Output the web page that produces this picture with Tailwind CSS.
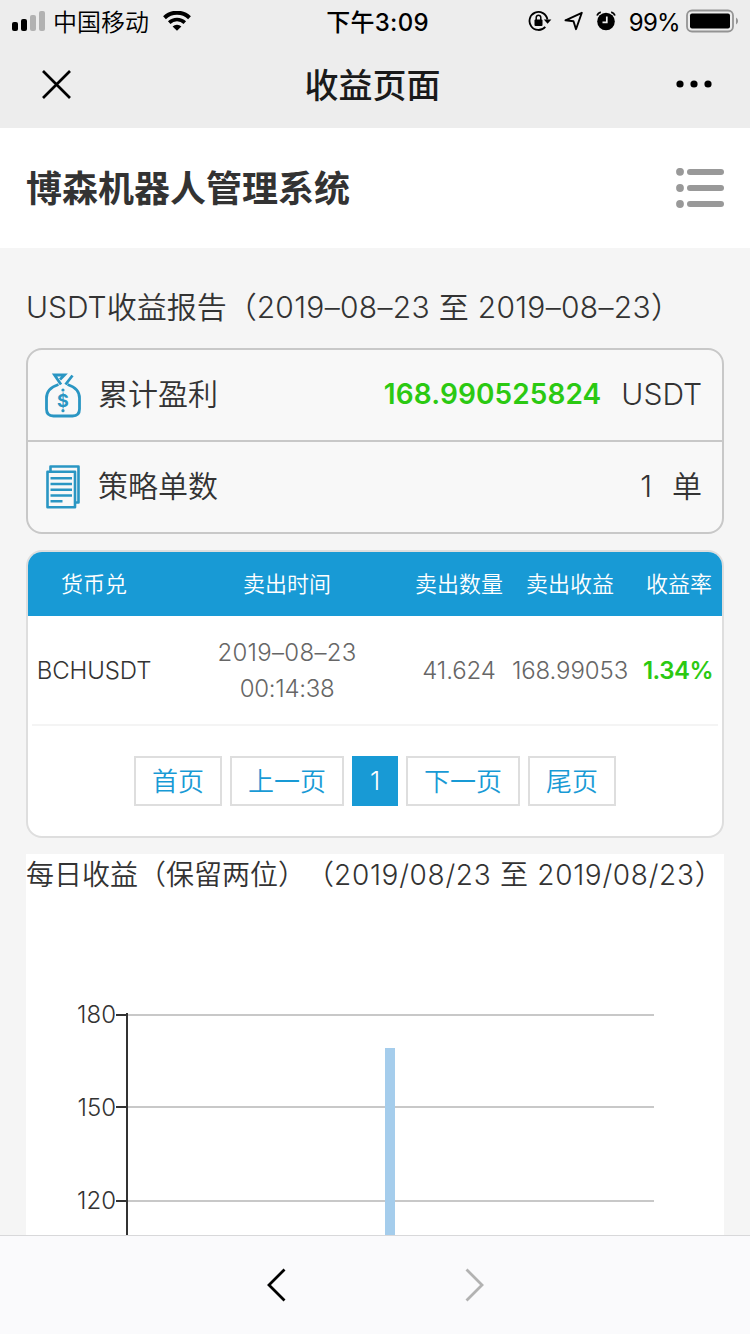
<!DOCTYPE html>
<html lang="zh-CN">
<head>
    <meta charset="UTF-8">
    <meta name="viewport" content="width=device-width, initial-scale=1.0">
    <title>收益页面</title>
    <!-- Tailwind CSS CDN -->
    <script src="https://cdn.jsdelivr.net/npm/@tailwindcss/browser@4"></script>
</head>
<body class="flex flex-col w-[750px] h-[1334px] overflow-hidden bg-[#f5f5f5] text-[#333] font-['Inter','Noto_Sans_CJK_SC',sans-serif] [text-spacing-trim:space-all]">

    <!-- Barra de estado -->
    <div class="h-10 shrink-0 bg-[#ededed] text-black grid grid-cols-3 items-center pl-3 pr-[11px] text-[24px] leading-[38px] whitespace-nowrap">
        <div class="flex items-center">
            <svg class="w-[34px] h-5 mr-[7px]" viewBox="0 0 34 20">
                <rect x="0" y="11" width="6" height="9" rx="2"/>
                <rect x="9" y="8" width="6" height="12" rx="2"/>
                <rect x="18" y="4" width="6" height="16" rx="2" fill="#b2b2b2"/>
                <rect x="27" y="0" width="6" height="20" rx="2" fill="#b2b2b2"/>
            </svg>
            <span class="pt-1 font-[350]">中国移动</span>
            <svg class="w-7 h-5 ml-[14px]" viewBox="0 0 28 20">
                <path d="M1.500 6.700a18 18 0 0 1 25 0" fill="none" stroke="#000" stroke-width="4"/>
                <path d="M6.200 11.600a11.300 11.300 0 0 1 15.600 0" fill="none" stroke="#000" stroke-width="3.600"/>
                <path d="M9.600 15.400a6.400 6.400 0 0 1 8.800 0L14 19.800z"/>
            </svg>
        </div>
        <div class="text-center font-medium tracking-[0.3px] pt-1 pl-1">下午3:09</div>
        <div class="flex items-center justify-end">
            <svg class="w-[24px] h-[22px]" viewBox="0 0 24 22">
                <path d="M19.400 9.500A9 9 0 1 0 17.300 16.900" fill="none" stroke="#000" stroke-width="1.800"/>
                <path d="M15.800 9.500h7.600l-3.800 4.300z"/>
                <rect x="6.500" y="9.500" width="8" height="6.500" rx="1"/>
                <path d="M8.200 10V7.500a2.300 2.300 0 0 1 4.600 0V10" fill="none" stroke="#000" stroke-width="1.500"/>
            </svg>
            <svg class="w-[19px] h-[20px] ml-3" viewBox="0 0 19 20">
                <path d="M17.800 1.800L1.500 9.300l8 .9 2.500 8z" fill="none" stroke="#000" stroke-width="1.900" stroke-linejoin="round"/>
            </svg>
            <svg class="w-5 h-5 ml-[13px]" viewBox="0 0 20 20">
                <circle cx="10" cy="10.500" r="8.800"/>
                <path d="M1 4.500Q2 2 4.800 1.200M19 4.500Q18 2 15.200 1.200" fill="none" stroke="#000" stroke-width="1.800"/>
                <path d="M10.800 5.500v5.800H6.500" fill="none" stroke="#ededed" stroke-width="1.700"/>
            </svg>
            <span class="ml-[13px] pt-1 tracking-[-0.7px]">99%</span>
            <svg class="w-[53px] h-6 ml-[6px]" viewBox="0 0 53 24">
                <rect x="1" y="1.500" width="46" height="21" rx="5" fill="none" stroke="#949494" stroke-width="1.800"/>
                <rect x="4" y="4.500" width="40" height="15" rx="2"/>
                <path d="M50 8.500a4 4 0 0 1 0 7z" fill="#949494"/>
            </svg>
        </div>
    </div>

    <!-- Barra de navegación -->
    <div class="h-[88px] shrink-0 bg-[#ededed] flex items-center justify-between pl-[42px] pr-[38px]">
        <svg class="w-[29px] h-[29px]" viewBox="0 0 29 29">
            <path d="M1 1l27 27M28 1L1 28" stroke="#000" stroke-width="2.700"/>
        </svg>
        <h1 class="pt-1 pr-0.5 text-[34px] leading-none font-medium text-[#1a1a1a]">收益页面</h1>
        <svg class="w-9 h-2" viewBox="0 0 36 8">
            <circle cx="4" cy="4" r="3.600"/>
            <circle cx="18" cy="4" r="3.600"/>
            <circle cx="32" cy="4" r="3.600"/>
        </svg>
    </div>

    <!-- Encabezado -->
    <header class="h-[120px] shrink-0 bg-white flex items-center justify-between px-[26px]">
        <h2 class="pt-0.5 text-[36px] leading-none font-bold">博森机器人管理系统</h2>
        <svg class="w-12 h-10" viewBox="0 0 48 40" fill="#999">
            <circle cx="4" cy="3.800" r="3.900"/><rect x="11" y="1" width="37" height="6" rx="3"/>
            <circle cx="4" cy="20" r="3.900"/><rect x="11" y="17" width="37" height="6" rx="3"/>
            <circle cx="4" cy="36" r="3.900"/><rect x="11" y="33" width="37" height="6" rx="3"/>
        </svg>
    </header>

    <main class="flex-1 min-h-0 overflow-hidden px-[26px]">
        <h3 class="h-[100px] pt-[19px] text-[30px] leading-[80px] whitespace-nowrap font-[350]">USDT收益报告（<span class="tracking-[0.3px]">2019–08–23 至 2019–08–23）</span></h3>

        <!-- Resumen -->
        <section class="h-[186px] border-2 border-[#c8c8c8] rounded-2xl bg-[#f8f8f8] text-[30px] font-[350]">
            <div class="h-[92px] flex items-center border-b-2 border-[#c8c8c8] pl-4 pr-5">
                <svg class="w-[38px] h-[46px]" viewBox="0 0 38 46" fill="none" stroke="#2a96c3" stroke-width="2.800">
                    <path d="M17 12.500L10.500 3H20.500L16 7.500M21.500 12.500L28.500 3.500"/>
                    <path d="M14.500 12.500C7 15 2.500 20 2.500 26v11q0 7 7 7h19q7 0 7-7V26C35.500 20 31 15 23.500 12.500"/>
                    <text x="19" y="34.500" text-anchor="middle" fill="#2a96c3" stroke="none" class="text-[18px] font-bold">$</text>
                    <circle cx="19" cy="18" r="1.600" fill="#2a96c3" stroke="none"/>
                    <circle cx="19" cy="38.700" r="1.600" fill="#2a96c3" stroke="none"/>
                </svg>
                <span class="ml-4 mr-auto pb-0.5">累计盈利</span>
                <span class="pb-0.5 text-[#2bc912] font-semibold text-[28px] tracking-[0.1px]">168.990525824</span>
                <span class="ml-5 pb-0.5">USDT</span>
            </div>
            <div class="h-[90px] flex items-center pl-[18px] pr-5">
                <svg class="w-[34px] h-[44px]" viewBox="0 0 34 44" fill="none" stroke="#2a96c3" stroke-width="2.600" stroke-linejoin="round">
                    <path d="M4.500 6V1.500h28V37.500H30"/>
                    <path d="M1.500 6.800h27.500v35.500H1.500z"/>
                    <path d="M4.500 13.200h21.500M4.500 19h21.500M4.500 24.800h21.500M4.500 30.500h21.500M4.500 36.300h12"/>
                </svg>
                <span class="ml-[18px] mr-auto pb-0.5">策略单数</span>
                <span class="pb-0.5">1</span>
                <span class="ml-5 pb-0.5">单</span>
            </div>
        </section>

        <!-- Tabla de ventas -->
        <section class="mt-4 h-[288px] border-2 border-[#dedede] rounded-2xl bg-white overflow-hidden">
            <div class="h-16 bg-[#189ad5] text-white text-[22px] font-[350] grid grid-cols-[132px_254px_90px_132px_86px] items-center text-center whitespace-nowrap">
                <span>货币兑</span>
                <span>卖出时间</span>
                <span>卖出数量</span>
                <span>卖出收益</span>
                <span>收益率</span>
            </div>
            <div class="h-[110px] text-[24px] text-[#666] font-[350] grid grid-cols-[132px_254px_90px_132px_84px] items-center text-center whitespace-nowrap">
                <span class="text-[#333] tracking-[-0.1px]">BCHUSDT</span>
                <span class="leading-9"><span class="tracking-[0.3px]">2019–08–23</span><br><span class="tracking-[-0.3px]">00:14:38</span></span>
                <span class="tracking-[-0.1px]">41.624</span>
                <span class="tracking-[-0.1px]">168.99053</span>
                <span class="text-[#2bc912] font-semibold tracking-[-0.5px]">1.34%</span>
            </div>
            <div class="mx-1 -mt-0.5 h-0.5 bg-[#f4f4f4]"></div>
            <div class="mt-[30px] flex justify-center gap-2 text-[26px] font-[350] leading-[47px] text-[#189ad5]">
                <a class="w-[88px] h-[50px] border-2 border-[#dedede] text-center">首页</a>
                <a class="w-[114px] h-[50px] border-2 border-[#dedede] text-center">上一页</a>
                <a class="w-[46px] h-[50px] leading-[50px] bg-[#189ad5] text-white text-center">1</a>
                <a class="w-[114px] h-[50px] border-2 border-[#dedede] text-center">下一页</a>
                <a class="w-[88px] h-[50px] border-2 border-[#dedede] text-center">尾页</a>
            </div>
        </section>

        <!-- Gráfico diario -->
        <section class="mt-4 bg-white">
            <h3 class="h-[42px] text-[28px] leading-[42px] whitespace-nowrap font-[350]">每日收益（保留两位）（<span class="tracking-[0.7px]">2019/08/23 至 2019/08/23）</span></h3>
            <svg class="w-[698px] h-[339px]" viewBox="0 0 698 339">
                <path d="M101 119H628M101 211H628M101 305H628" stroke="#c8c8c8" stroke-width="2"/>
                <rect x="359" y="152" width="10" height="187" fill="#a5cdec"/>
                <path d="M101 117V339M90 119h11M90 211h11M90 305h11" stroke="#333" stroke-width="2"/>
                <g fill="#333" text-anchor="end" class="text-[24px] font-[350]">
                    <text x="90" y="127">180</text>
                    <text x="90" y="220">150</text>
                    <text x="90" y="313">120</text>
                </g>
            </svg>
        </section>
    </main>

    <!-- Barra inferior -->
    <footer class="h-[99px] shrink-0 border-t border-[#d8d8da] bg-[#fafafc] flex justify-center gap-[179px] pt-8">
        <svg class="w-[19px] h-[34px]" viewBox="0 0 19 34"><path d="M17.500 1.500L2 17l15.500 15.500" fill="none" stroke="#000" stroke-width="2.800"/></svg>
        <svg class="w-[19px] h-[34px]" viewBox="0 0 19 34"><path d="M1.500 1.500L17 17 1.500 32.500" fill="none" stroke="#b2b2b2" stroke-width="2.800"/></svg>
    </footer>
</body>
</html>
